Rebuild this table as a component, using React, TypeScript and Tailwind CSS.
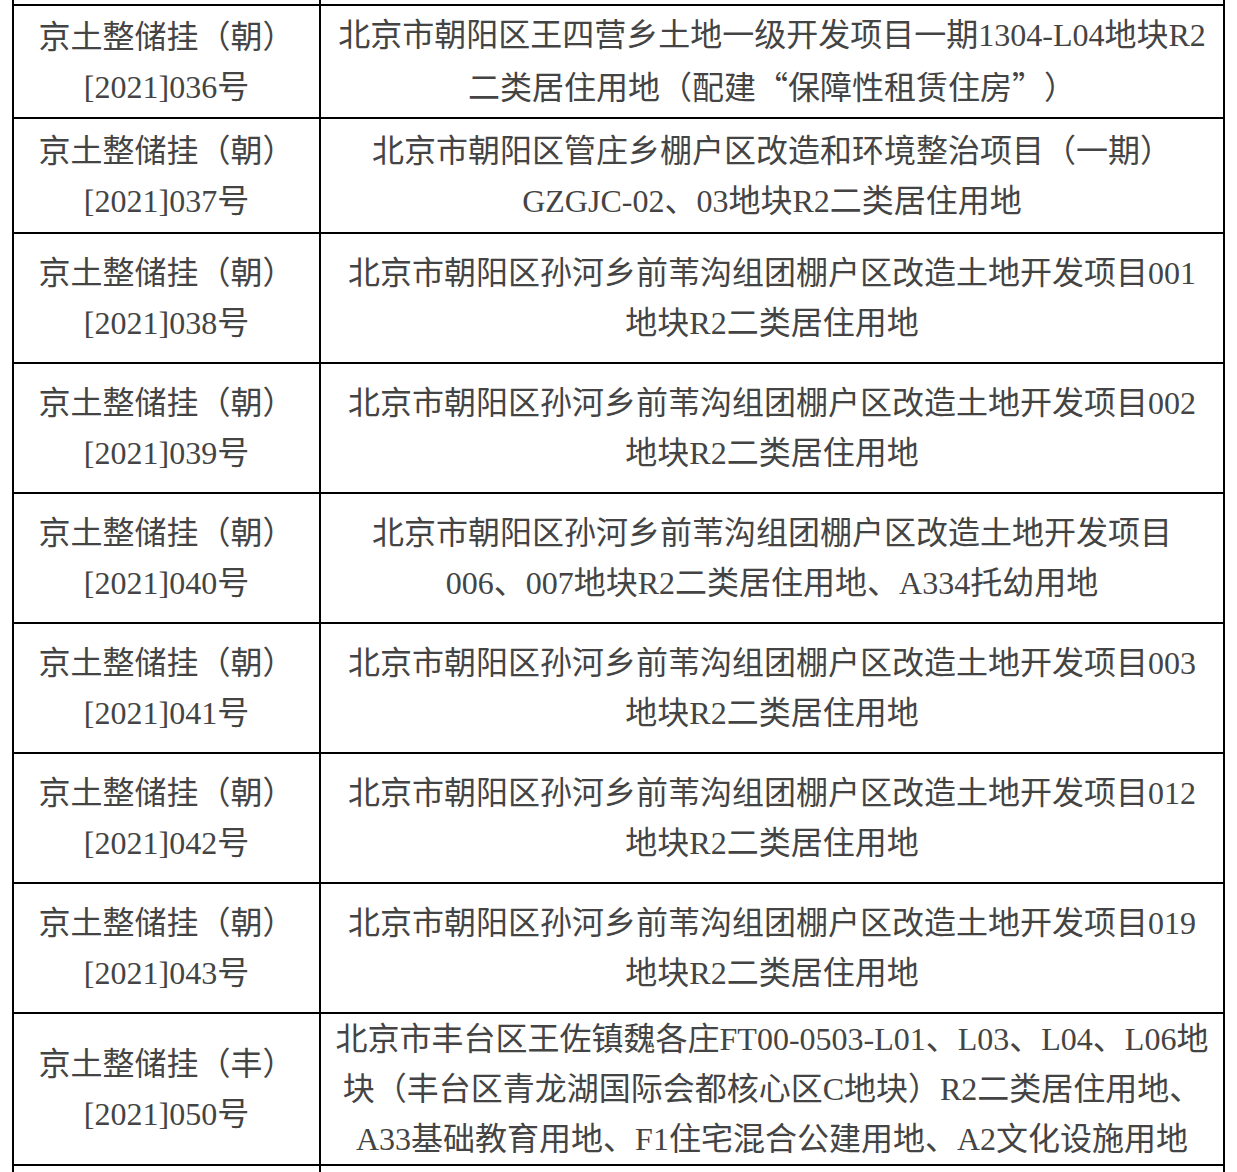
import React from "react";

type Row = { h: string; left: string[]; right: string[] };

const rows: Row[] = [
  {
    h: "h-[113px]",
    left: ["京土整储挂（朝）", "[2021]036号"],
    right: ["北京市朝阳区王四营乡土地一级开发项目一期1304-L04地块R2", "二类居住用地（配建“保障性租赁住房”）"],
  },
  {
    h: "h-[115px]",
    left: ["京土整储挂（朝）", "[2021]037号"],
    right: ["北京市朝阳区管庄乡棚户区改造和环境整治项目（一期）", "GZGJC-02、03地块R2二类居住用地"],
  },
  {
    h: "h-[130px]",
    left: ["京土整储挂（朝）", "[2021]038号"],
    right: ["北京市朝阳区孙河乡前苇沟组团棚户区改造土地开发项目001", "地块R2二类居住用地"],
  },
  {
    h: "h-[130px]",
    left: ["京土整储挂（朝）", "[2021]039号"],
    right: ["北京市朝阳区孙河乡前苇沟组团棚户区改造土地开发项目002", "地块R2二类居住用地"],
  },
  {
    h: "h-[130px]",
    left: ["京土整储挂（朝）", "[2021]040号"],
    right: ["北京市朝阳区孙河乡前苇沟组团棚户区改造土地开发项目", "006、007地块R2二类居住用地、A334托幼用地"],
  },
  {
    h: "h-[130px]",
    left: ["京土整储挂（朝）", "[2021]041号"],
    right: ["北京市朝阳区孙河乡前苇沟组团棚户区改造土地开发项目003", "地块R2二类居住用地"],
  },
  {
    h: "h-[130px]",
    left: ["京土整储挂（朝）", "[2021]042号"],
    right: ["北京市朝阳区孙河乡前苇沟组团棚户区改造土地开发项目012", "地块R2二类居住用地"],
  },
  {
    h: "h-[130px]",
    left: ["京土整储挂（朝）", "[2021]043号"],
    right: ["北京市朝阳区孙河乡前苇沟组团棚户区改造土地开发项目019", "地块R2二类居住用地"],
  },
  {
    h: "h-[152px]",
    left: ["京土整储挂（丰）", "[2021]050号"],
    right: [
      "北京市丰台区王佐镇魏各庄FT00-0503-L01、L03、L04、L06地",
      "块（丰台区青龙湖国际会都核心区C地块）R2二类居住用地、",
      "A33基础教育用地、F1住宅混合公建用地、A2文化设施用地",
    ],
  },
];

function Line({ text }: { text: string }) {
  const parts = text.split(/([“”])/);
  return (
    <div className="whitespace-nowrap leading-[50px]">
      {parts.map((p, i) =>
        p === "“" ? (
          <span key={i} className="inline-block w-[32px] text-right font-['Noto_Sans_CJK_SC',sans-serif]">
            {p}
          </span>
        ) : p === "”" ? (
          <span key={i} className="inline-block w-[32px] text-left font-['Noto_Sans_CJK_SC',sans-serif]">
            {p}
          </span>
        ) : (
          <span key={i}>{p}</span>
        )
      )}
    </div>
  );
}

export default function App() {
  return (
    <div className="w-[1237px] h-[1172px] overflow-hidden bg-white pl-[12px] font-['Liberation_Serif','Noto_Sans_CJK_SC',serif] text-[32px] text-[#444444]">
      <div className="w-[1213px] border-x-2 border-black">
        <div className="grid h-[4px] grid-cols-[307px_1fr] border-b-2 border-black box-content">
          <div className="border-r-2 border-black" />
          <div />
        </div>
        {rows.map((r, i) => (
          <div key={i} className={`grid grid-cols-[307px_1fr] border-b-2 border-black ${r.h}`}>
            <div className="flex flex-col items-center justify-center border-r-2 border-black">
              {r.left.map((t, j) => (
                <Line key={j} text={t} />
              ))}
            </div>
            <div className="flex flex-col items-center justify-center">
              {r.right.map((t, j) => (
                <Line key={j} text={t} />
              ))}
            </div>
          </div>
        ))}
        <div className="grid h-[20px] grid-cols-[307px_1fr]">
          <div className="border-r-2 border-black" />
          <div />
        </div>
      </div>
    </div>
  );
}
